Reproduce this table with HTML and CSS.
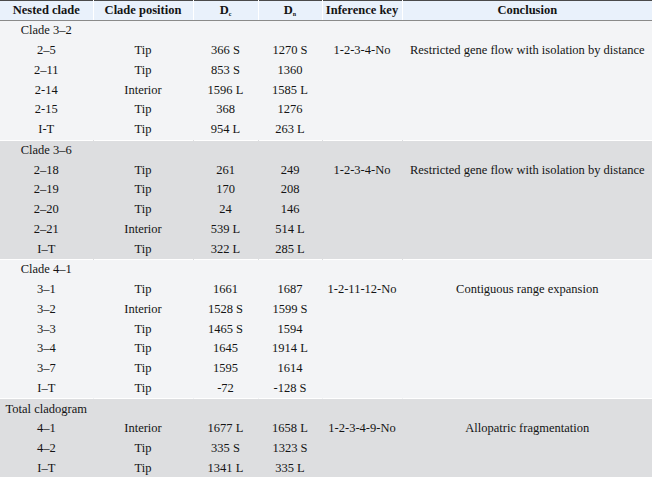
FILE: index.html
```html
<!DOCTYPE html>
<html>
<head>
<meta charset="utf-8">
<link rel="stylesheet" href="styles.css">
</head>
<body>
<table class="nca">
  <colgroup>
    <col class="c1"><col class="c2"><col class="c3"><col class="c4"><col class="c5"><col class="c6">
  </colgroup>
  <thead>
    <tr>
      <th>Nested clade</th>
      <th>Clade position</th>
      <th>D<sub>c</sub></th>
      <th>D<sub>n</sub></th>
      <th>Inference key</th>
      <th>Conclusion</th>
    </tr>
  </thead>
  <tbody class="light">
    <tr><td>Clade 3–2</td><td></td><td></td><td></td><td></td><td></td></tr>
    <tr><td>2–5</td><td>Tip</td><td>366 S</td><td>1270 S</td><td>1-2-3-4-No</td><td>Restricted gene flow with isolation by distance</td></tr>
    <tr><td>2–11</td><td>Tip</td><td>853 S</td><td>1360</td><td></td><td></td></tr>
    <tr><td>2-14</td><td>Interior</td><td>1596 L</td><td>1585 L</td><td></td><td></td></tr>
    <tr><td>2-15</td><td>Tip</td><td>368</td><td>1276</td><td></td><td></td></tr>
    <tr><td>I-T</td><td>Tip</td><td>954 L</td><td>263 L</td><td></td><td></td></tr>
  </tbody>
  <tbody class="dark">
    <tr><td>Clade 3–6</td><td></td><td></td><td></td><td></td><td></td></tr>
    <tr><td>2–18</td><td>Tip</td><td>261</td><td>249</td><td>1-2-3-4-No</td><td>Restricted gene flow with isolation by distance</td></tr>
    <tr><td>2–19</td><td>Tip</td><td>170</td><td>208</td><td></td><td></td></tr>
    <tr><td>2–20</td><td>Tip</td><td>24</td><td>146</td><td></td><td></td></tr>
    <tr><td>2–21</td><td>Interior</td><td>539 L</td><td>514 L</td><td></td><td></td></tr>
    <tr><td>I–T</td><td>Tip</td><td>322 L</td><td>285 L</td><td></td><td></td></tr>
  </tbody>
  <tbody class="light">
    <tr><td>Clade 4–1</td><td></td><td></td><td></td><td></td><td></td></tr>
    <tr><td>3–1</td><td>Tip</td><td>1661</td><td>1687</td><td>1-2-11-12-No</td><td>Contiguous range expansion</td></tr>
    <tr><td>3–2</td><td>Interior</td><td>1528 S</td><td>1599 S</td><td></td><td></td></tr>
    <tr><td>3–3</td><td>Tip</td><td>1465 S</td><td>1594</td><td></td><td></td></tr>
    <tr><td>3–4</td><td>Tip</td><td>1645</td><td>1914 L</td><td></td><td></td></tr>
    <tr><td>3–7</td><td>Tip</td><td>1595</td><td>1614</td><td></td><td></td></tr>
    <tr><td>I–T</td><td>Tip</td><td>-72</td><td>-128 S</td><td></td><td></td></tr>
  </tbody>
  <tbody class="dark last">
    <tr><td>Total cladogram</td><td></td><td></td><td></td><td></td><td></td></tr>
    <tr><td>4–1</td><td>Interior</td><td>1677 L</td><td>1658 L</td><td>1-2-3-4-9-No</td><td>Allopatric fragmentation</td></tr>
    <tr><td>4–2</td><td>Tip</td><td>335 S</td><td>1323 S</td><td></td><td></td></tr>
    <tr><td>I–T</td><td>Tip</td><td>1341 L</td><td>335 L</td><td></td><td></td></tr>
  </tbody>
</table>
</body>
</html>
```

FILE: styles.css
```css
html, body {
  margin: 0;
  padding: 0;
  background: #ffffff;
}

.nca {
  width: 652px;
  border-collapse: collapse;
  table-layout: fixed;
  font-family: "Liberation Serif", "Times New Roman", serif;
  font-size: 12.5px;
  color: #141414;
  border-top: 1px solid #4a4a4a;
  border-bottom: 2px solid #3a3a3a;
}

.c1 { width: 93px; }
.c2 { width: 100px; }
.c3 { width: 65px; }
.c4 { width: 64px; }
.c5 { width: 80px; }
.c6 { width: 250px; }

.nca th {
  background: #e9f1fb;
  font-weight: bold;
  height: 19px;
  padding: 0;
  text-align: center;
  border-left: 1px solid #ffffff;
  border-bottom: 1px solid #8a8a8a;
  line-height: 19px;
  white-space: nowrap;
}

.nca th:first-child {
  border-left: none;
}

.nca sub {
  font-size: 6px;
  vertical-align: -2px;
  line-height: 0;
}

.nca td {
  height: 19.75px;
  padding: 0;
  text-align: center;
  line-height: 15px;
  white-space: nowrap;
  border-left: 1px solid transparent;
}

.nca td:first-child {
  border-left: none;
}

.light td {
  background: #f3f4f6;
}

.dark td {
  background: #dddee0;
}

.nca tbody tr:first-child td {
  border-top: 1px solid #ffffff;
}

.nca thead + tbody tr:first-child td {
  border-top: none;
}
```
